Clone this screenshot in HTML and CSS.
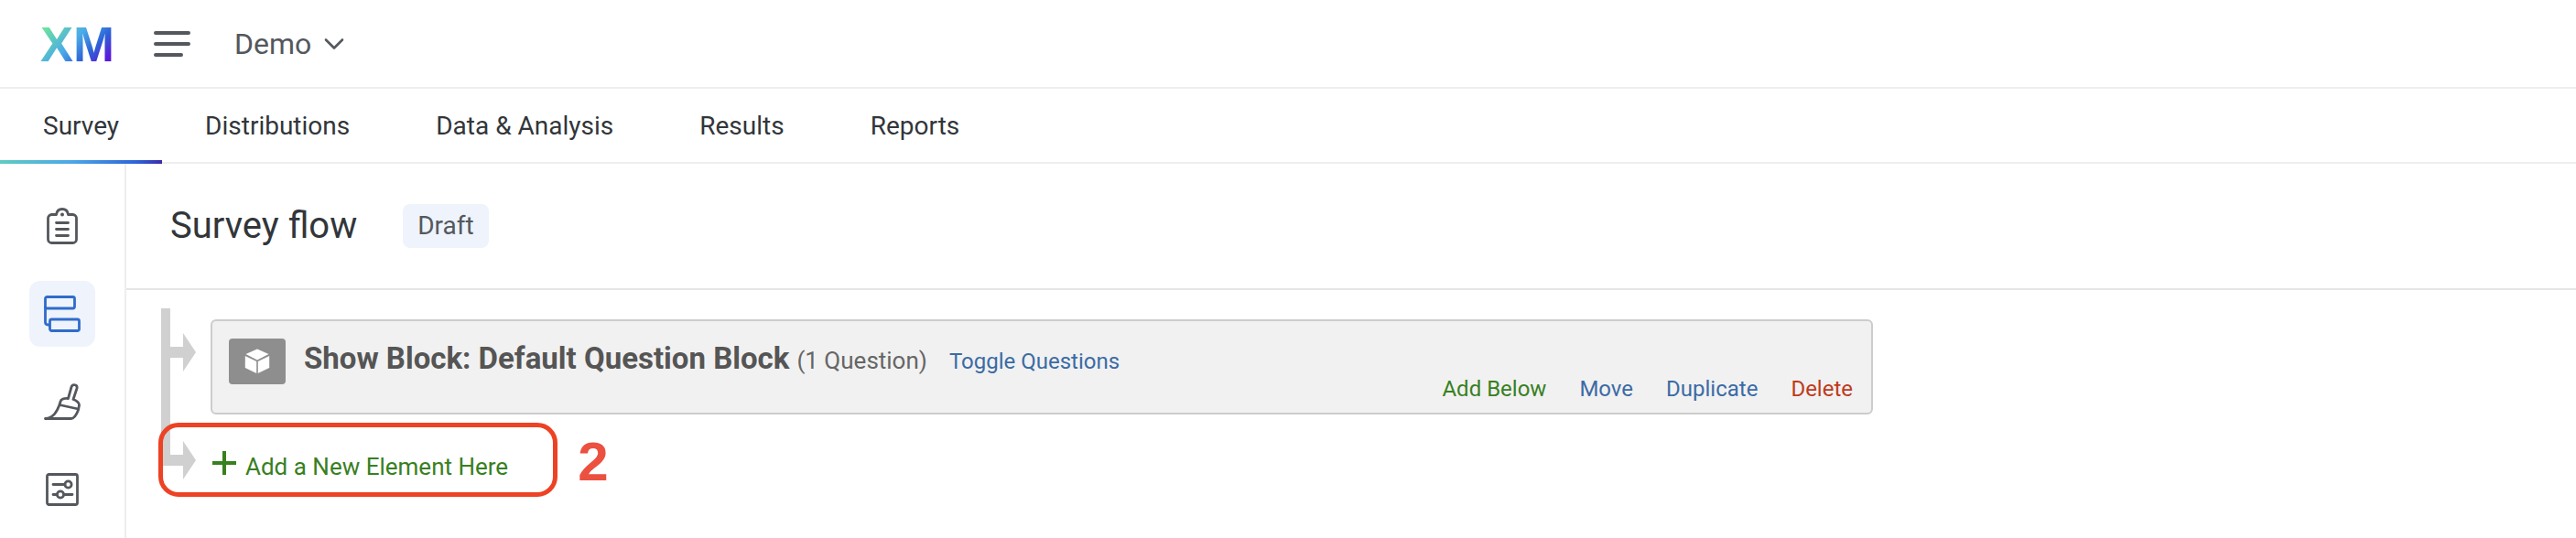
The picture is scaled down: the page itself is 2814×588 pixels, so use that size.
FILE: index.html
```
<!DOCTYPE html>
<html lang="en">

<head>
  <meta charset="UTF-8" />
  <meta name="viewport" content="width=device-width, initial-scale=1.0" />
  <title>Survey flow</title>
  <link rel="stylesheet" href="styles.css">
</head>

<body>

  <header class="top-bar">
    <a href="#" class="logo">XM</a>
    <button class="menu-btn" aria-label="Menu">
      <svg width="40" height="28" viewBox="0 0 40 28" fill="none" stroke="currentColor" stroke-width="4" stroke-linecap="round">
        <path d="M2 2h36M2 14h36M2 26h28" />
      </svg>
    </button>
    <button class="project-btn">
      Demo
      <svg width="22" height="14" viewBox="0 0 22 14" fill="none" stroke="currentColor" stroke-width="2.6" stroke-linecap="round" stroke-linejoin="round">
        <path d="M2 2.5l9 9 9-9" />
      </svg>
    </button>
  </header>

  <nav class="tabs">
    <a href="#" class="tab active">Survey</a>
    <a href="#" class="tab">Distributions</a>
    <a href="#" class="tab">Data &amp; Analysis</a>
    <a href="#" class="tab">Results</a>
    <a href="#" class="tab">Reports</a>
  </nav>

  <div class="page">
    <aside class="sidebar">
      <a href="#" class="side-link" aria-label="Survey builder">
        <svg width="40" height="40" viewBox="0 0 40 40" fill="none" stroke="currentColor" stroke-width="2.8" stroke-linecap="round" stroke-linejoin="round">
          <path d="M13.5 7.5H8.5a4 4 0 0 0-4 4V34.5a4 4 0 0 0 4 4h23a4 4 0 0 0 4-4V11.5a4 4 0 0 0-4-4h-5C26 4 23.5 1.5 20 1.5S14 4 13.5 7.5z" />
          <path d="M13.5 16.5h13M13.5 23.5h13M13.5 30.5h13" />
          <circle cx="20" cy="7.5" r="2" fill="currentColor" stroke="none" />
        </svg>
      </a>
      <a href="#" class="side-link active" aria-label="Survey flow">
        <svg width="40" height="40" viewBox="0 0 40 40" fill="none" stroke="currentColor" stroke-width="2.8" stroke-linejoin="round">
          <rect x="1.5" y="1.5" width="32" height="12.5" rx="2" />
          <rect x="6.5" y="26" width="32" height="12.5" rx="2" />
          <path d="M1.5 12v17q0 3 3 3h2" />
        </svg>
      </a>
      <a href="#" class="side-link" aria-label="Look and feel">
        <svg width="40" height="40" viewBox="0 0 40 40" fill="none" stroke="currentColor" stroke-width="2.8" stroke-linecap="round" stroke-linejoin="round">
          <path d="M1.5 38.5H29.5C34 38.5 36 33 37.5 29L38.5 24C39 21.5 35.5 18.5 32 17.5L36 5.5C37 1.5 31.5 0 30 4L26.5 16.5C22 16 18.5 17.5 18 20L17 23.5C14.5 30 11 37.5 1.5 38.5z" />
          <path d="M17 23.5l20.5 4.5" />
        </svg>
      </a>
      <a href="#" class="side-link" aria-label="Survey options">
        <svg width="40" height="40" viewBox="0 0 40 40" fill="none" stroke="currentColor" stroke-width="2.8" stroke-linecap="round">
          <rect x="3.5" y="3.5" width="33" height="33" rx="2" />
          <path d="M10 14.5h13M10 25.5h4M22 25.5h9" />
          <circle cx="26.5" cy="14.5" r="3.6" />
          <circle cx="18" cy="25.5" r="3.6" />
        </svg>
      </a>
    </aside>

    <main class="main">
      <div class="title-bar">
        <h1>Survey flow</h1>
        <span class="badge">Draft</span>
      </div>

      <div class="flow">
        <!-- Block element -->
        <div class="flow-row">
          <div class="branch">
            <svg width="28" height="42" viewBox="0 0 28 42" fill="currentColor">
              <path d="M0 15h14V0l14 21-14 21V27H0z" />
            </svg>
          </div>
          <section class="block">
            <div class="block-icon">
              <svg width="28" height="28" viewBox="0 0 28 28" fill="#fff">
                <path d="M14 .5l12.5 5.5L14 12.5 1.5 6z" />
                <path d="M.8 8l12.4 6v13L.8 21z" />
                <path d="M27.2 8l-12.4 6v13l12.4-6z" />
              </svg>
            </div>
            <div class="block-body">
              <div class="block-title">
                <h2>Show Block: Default Question Block</h2>
                <span class="count">(1 Question)</span>
                <a href="#" class="toggle">Toggle Questions</a>
              </div>
              <div class="block-actions">
                <a href="#" class="add">Add Below</a>
                <a href="#">Move</a>
                <a href="#">Duplicate</a>
                <a href="#" class="delete">Delete</a>
              </div>
            </div>
          </section>
        </div>

        <!-- Add element -->
        <div class="flow-row last">
          <div class="branch">
            <svg width="28" height="42" viewBox="0 0 28 42" fill="currentColor">
              <path d="M0 15h14V0l14 21-14 21V27H0z" />
            </svg>
          </div>
          <button class="add-element">
            <svg width="26" height="26" viewBox="0 0 26 26" stroke="currentColor" stroke-width="4">
              <path d="M13 0v26M0 13h26" />
            </svg>
            Add a New Element Here
          </button>
          <div class="callout"></div>
          <span class="callout-number">2</span>
        </div>
      </div>
    </main>
  </div>

</body>
</html>
```
FILE: styles.css
```
* {
  box-sizing: border-box;
}

body {
  margin: 0;
  min-height: 100vh;
  display: flex;
  flex-direction: column;
  background: #fff;
  color: #32363a;
  font-family: Roboto, sans-serif;
  font-size: 24px;
}

a {
  color: #3b6ba5;
  text-decoration: none;
}

button {
  padding: 0;
  border: none;
  background: none;
  font: inherit;
  cursor: pointer;
}

svg {
  display: block;
}

.top-bar {
  display: flex;
  align-items: center;
  height: 97px;
  padding: 0 44px;
  border-bottom: 2px solid #eee;
  color: #54585d;
}

.logo {
  margin-right: 43px;
  background: linear-gradient(135deg, #6be0a0 14%, #4baae8 45%, #2d62d6 66%, #5a1bdc 84%);
  -webkit-background-clip: text;
  background-clip: text;
  color: transparent;
  font-family: "Liberation Sans", Arial, sans-serif;
  font-size: 54px;
  font-weight: bold;
  line-height: 60px;
}

.menu-btn {
  margin-right: 48px;
  color: inherit;
}

.project-btn {
  display: flex;
  align-items: center;
  gap: 14px;
  color: inherit;
  font-size: 32px;
}

.tabs {
  display: flex;
  height: 82px;
  border-bottom: 2px solid #eee;
}

.tab {
  position: relative;
  height: 80px;
  padding: 0 47px;
  color: #32363a;
  font-size: 28px;
  line-height: 82px;
}

.tab.active::after {
  content: "";
  position: absolute;
  left: 0;
  right: 0;
  bottom: -2px;
  height: 4px;
  background: linear-gradient(90deg, #5fcbc0, #4ba6e8 45%, #2d62d6 85%, #3a2ba8);
}

.page {
  flex: 1;
  display: flex;
}

.sidebar {
  display: flex;
  flex-direction: column;
  gap: 24px;
  padding: 32px;
  padding-bottom: 0;
  border-right: 2px solid #eee;
}

.side-link {
  display: flex;
  align-items: center;
  justify-content: center;
  width: 72px;
  height: 72px;
  border-radius: 12px;
  color: #54585d;
}

.side-link.active {
  background: #eef3fc;
  color: #2f6ccb;
}

.main {
  flex: 1;
}

.title-bar {
  display: flex;
  align-items: center;
  gap: 50px;
  padding: 44px 48px;
  border-bottom: 2px solid #e5e5e5;
}

h1 {
  margin: 0;
  font-size: 40px;
  font-weight: normal;
  line-height: 48px;
}

.badge {
  padding: 0 16px;
  border-radius: 8px;
  background: #eef3fc;
  color: #54585d;
  font-size: 28px;
  line-height: 48px;
}

.flow {
  padding: 20px 38px;
}

.flow-row {
  position: relative;
  display: flex;
  max-width: 1870px;
}

.branch {
  width: 54px;
  padding-top: 27px;
  border-left: 10px solid #d0d0d0;
  color: #d0d0d0;
}

.block {
  flex: 1;
  display: flex;
  gap: 20px;
  margin: 12px 0;
  padding: 19px 20px 0 18px;
  height: 104px;
  border: 2px solid #ccc;
  border-radius: 6px;
  background: #f1f1f1;
}

.block-icon {
  display: flex;
  align-items: center;
  justify-content: center;
  width: 62px;
  height: 50px;
  border-radius: 4px;
  background: #8e8e8e;
}

.block-body {
  flex: 1;
}

.block-title {
  display: flex;
  align-items: baseline;
  line-height: 44px;
}

h2 {
  margin: 0;
  color: #555;
  font-size: 33px;
}

.count {
  margin-left: 8px;
  color: #666;
  font-size: 26px;
}

.toggle {
  margin-left: 24px;
}

.block-actions {
  display: flex;
  justify-content: flex-end;
  gap: 36px;
  line-height: 16px;
}

.add,
.add-element {
  color: #38801f;
}

.delete {
  color: #bf3a1c;
}

.flow-row.last {
  height: 44px;
  align-items: flex-start;
}

.last .branch {
  height: 44px;
  padding-top: 17px;
}

.add-element {
  display: flex;
  align-items: baseline;
  gap: 10px;
  padding: 28px 2px 0;
  font-size: 26px;
  line-height: 28px;
}

.callout {
  position: absolute;
  top: -3px;
  left: -3px;
  width: 436px;
  height: 81px;
  border: 5px solid #ed4224;
  border-radius: 22px;
}

.callout-number {
  margin-left: 74px;
  color: #eb5040;
  font-family: "Liberation Sans", Arial, sans-serif;
  font-size: 60px;
  font-weight: bold;
  line-height: 80px;
}
```
